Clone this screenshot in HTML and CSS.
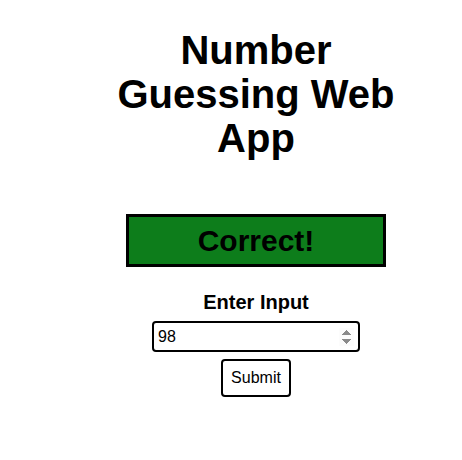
FILE: index.html
```html
<!DOCTYPE html>
<html>
<head>
<meta charset="utf-8">
<link rel="stylesheet" href="styles.css">
</head>
<body>
<div class="app">
  <h1 class="title">Number Guessing Web App</h1>
  <div class="result">Correct!</div>
  <form class="guess" onsubmit="return false">
    <label class="label" for="num">Enter Input</label>
    <input class="num" id="num" type="number" value="98" autofocus>
    <button class="submit" type="submit">Submit</button>
  </form>
</div>
</body>
</html>
```
FILE: styles.css
```css
html, body {
  margin: 0;
  background: #fff;
}
body {
  font-family: "Liberation Sans", Arial, sans-serif;
  color: #000;
}
.app {
  width: 300px;
  margin-left: 106px;
  display: flex;
  flex-direction: column;
  align-items: center;
}
.title {
  margin: 28px 0 0;
  font-size: 40px;
  line-height: 44px;
  font-weight: bold;
  text-align: center;
}
.result {
  margin-top: 54px;
  width: 254px;
  height: 47px;
  border: 3px solid #000;
  background: #0d7d1b;
  font-size: 30px;
  font-weight: bold;
  display: flex;
  align-items: center;
  justify-content: center;
}
.guess {
  margin-top: 24px;
  display: flex;
  flex-direction: column;
  align-items: center;
}
.label {
  font-size: 20px;
  font-weight: bold;
  line-height: 23px;
}
.num {
  margin-top: 7px;
  box-sizing: border-box;
  width: 208px;
  height: 31px;
  border: 2px solid #000;
  border-radius: 4px;
  padding: 0 4px;
  font-family: "Liberation Sans", Arial, sans-serif;
  font-size: 16px;
  color: #000;
  outline: none;
}
.submit {
  margin-top: 7px;
  box-sizing: border-box;
  height: 38px;
  padding: 0 8px;
  border: 2px solid #000;
  border-radius: 4px;
  background: #fff;
  font-family: "Liberation Sans", Arial, sans-serif;
  font-size: 16px;
  color: #000;
}
```
